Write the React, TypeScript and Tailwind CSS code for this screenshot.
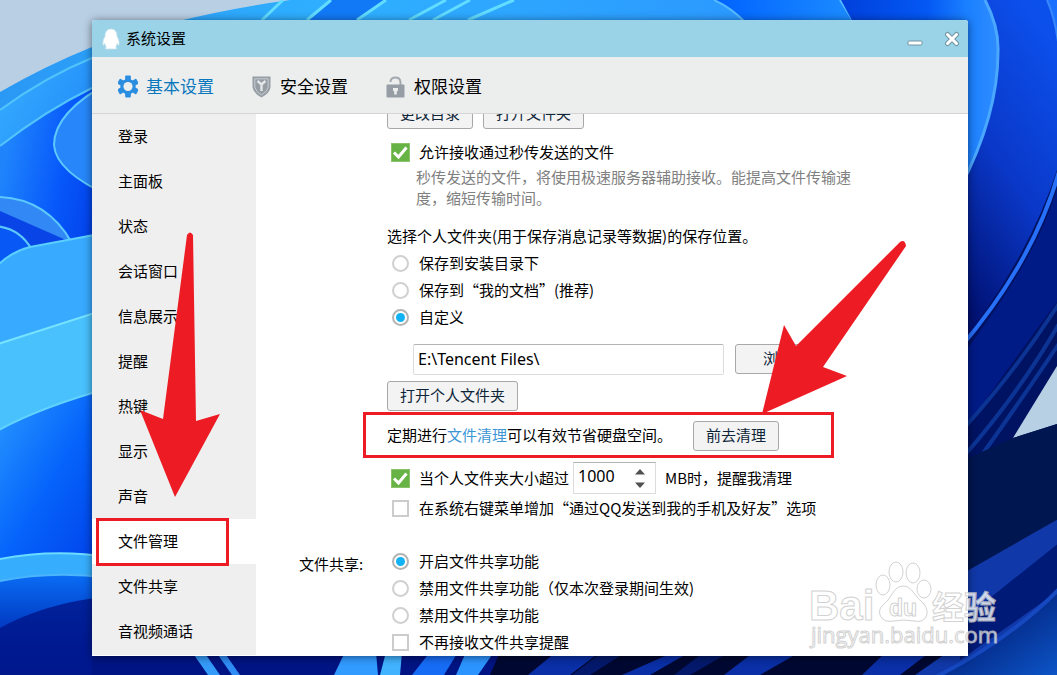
import { useState, type ReactNode } from "react";

const TABS = [
    { id: "basic", label: "基本设置" },
    { id: "safety", label: "安全设置" },
    { id: "rights", label: "权限设置" }
];

const MENU = ["登录", "主面板", "状态", "会话窗口", "信息展示", "提醒", "热键", "显示", "声音", "文件管理", "文件共享", "音视频通话"];

const SAVE_OPTIONS = ["保存到安装目录下", "保存到“我的文档”(推荐)", "自定义"];

const SHARE_OPTIONS = ["开启文件共享功能", "禁用文件共享功能（仅本次登录期间生效)", "禁用文件共享功能"];

function Wallpaper() {
    return (
        <svg className="absolute inset-0 h-full w-full" viewBox="0 0 1057 675" preserveAspectRatio="none" aria-hidden="true">
            <defs>
                <linearGradient id="petal" x1="0" y1="0" x2="1" y2="1">
                    <stop offset="0" stopColor="#37b0ff" />
                    <stop offset="1" stopColor="#1473f5" />
                </linearGradient>
                <linearGradient id="deep" x1="0" y1="0" x2="1" y2="1">
                    <stop offset="0" stopColor="#2b9dff" />
                    <stop offset="0.5" stopColor="#0563fb" />
                    <stop offset="1" stopColor="#003be6" />
                </linearGradient>
                <linearGradient id="fold" x1="0" y1="0.6" x2="1" y2="0.9">
                    <stop offset="0" stopColor="#1f84fc" />
                    <stop offset="0.5" stopColor="#0758fa" />
                    <stop offset="1" stopColor="#003ae4" />
                </linearGradient>
                <linearGradient id="top" x1="0" y1="0" x2="1" y2="0">
                    <stop offset="0" stopColor="#2a98f5" />
                    <stop offset="0.45" stopColor="#2fb0ff" />
                    <stop offset="1" stopColor="#2b98ff" />
                </linearGradient>
                <linearGradient id="topRight" x1="0" y1="0" x2="1" y2="0">
                    <stop offset="0" stopColor="#0062ff" />
                    <stop offset="1" stopColor="#1c8cff" />
                </linearGradient>
                <linearGradient id="rightPetal" x1="0" y1="0" x2="1" y2="0">
                    <stop offset="0" stopColor="#0040dc" />
                    <stop offset="0.55" stopColor="#0458f4" />
                    <stop offset="0.8" stopColor="#1a80ff" />
                    <stop offset="1" stopColor="#2f8cff" />
                </linearGradient>
                <linearGradient id="rightBand" x1="0.7" y1="0" x2="0.3" y2="1">
                    <stop offset="0" stopColor="#0c50ec" />
                    <stop offset="0.5" stopColor="#0a38c8" />
                    <stop offset="1" stopColor="#001070" />
                </linearGradient>
                <linearGradient id="night" x1="0" y1="0" x2="0" y2="1">
                    <stop offset="0" stopColor="#0a6cf4" />
                    <stop offset="0.5" stopColor="#0030b8" />
                    <stop offset="1" stopColor="#001482" />
                </linearGradient>
                <linearGradient id="corner" x1="0.2" y1="0.2" x2="1" y2="1">
                    <stop offset="0" stopColor="#001468" />
                    <stop offset="1" stopColor="#0d58cc" />
                </linearGradient>
            </defs>
            <rect width="1057" height="675" fill="#b9cfe4" />
            <path d="M0 92Q45 66 92 47Q180 15 290 0H760V675H0Z" fill="url(#top)" />
            <path d="M0 110Q45 77 92 58L110 52V250H0Z" fill="url(#petal)" />
            <path d="M0 146Q45 111 92 88L110 78V250H0Z" fill="url(#fold)" />
            <path d="M110 82Q54 112 54 145Q56 172 110 196Z" fill="#2787fa" stroke="#5cc8fb" strokeWidth="2" />
            <path d="M0 110Q45 77 92 58M0 146Q45 111 92 88" fill="none" stroke="#53c4fb" strokeWidth="2" />
            <path d="M-5 197Q46 197 72 243L-5 270Z" fill="#3288f5" stroke="#5cc8fb" strokeWidth="2" />
            <path d="M0 211L66 240L0 270Z" fill="#0844e6" />
            <path d="M-5 226Q20 228 32 250L-5 270Z" fill="#0758f4" stroke="#5cc8fb" strokeWidth="2" />
            <path d="M-5 268Q10 252 30 247L110 232V350H-5Z" fill="#38aaff" stroke="#5bcffd" strokeWidth="2" />
            <path d="M-5 345L110 308V440H-5Z" fill="#48c1fd" stroke="#77e3ff" strokeWidth="2" />
            <path d="M-5 432Q40 407 110 388V575H-5Z" fill="url(#deep)" stroke="#62d2ff" strokeWidth="2" />
            <path d="M-5 560Q50 548 110 557V700H-5Z" fill="#37aefd" stroke="#6bdcff" strokeWidth="2" />
            <path d="M-5 582Q50 570 110 578V700H-5Z" fill="url(#night)" stroke="#4bb4fb" strokeWidth="2" />
            <path d="M0 628Q45 603 110 596V675H0Z" fill="#001589" opacity="0.8" />

            <path d="M386 0L357 20H307L331 0Z" fill="#1279f6" />
            <path d="M283 0L262 20M331 0L307 20M386 0L357 20M446 0L409 20M470 0L433 20M514 0L468 20" stroke="#62dcff" strokeWidth="3" fill="none" />
            <path d="M714 0Q730 7 744 21H853L840 0Z" fill="url(#topRight)" />
            <path d="M714 0Q730 7 744 21M840 0L853 21" stroke="#55b9ff" strokeWidth="2" fill="none" />

            <path d="M900 24H1057V675H900Z" fill="#001262" />
            <path d="M980 0H1057V170Q1030 255 960 345V0Z" fill="url(#rightBand)" />
            <path d="M1047 0Q1056 20 1059 50V0Z" fill="#1c70ff" />
            <path d="M1047 0Q1056 20 1059 50" fill="none" stroke="#3787fb" strokeWidth="2" />
            <path d="M841 0H985Q999 27 998 52Q998 115 960 188V24H854Z" fill="url(#rightPetal)" />
            <path d="M985 0Q999 27 998 52Q998 115 960 188" fill="none" stroke="#4ba8ff" strokeWidth="3" />
            <path d="M1060 168Q1035 260 960 348" stroke="#2770fa" strokeWidth="4" fill="none" />
            <path d="M1060 178Q1042 252 960 358L968 425Q1010 365 1057 302Z" fill="#001a86" />
            <path d="M1060 302Q1015 372 964 428M1060 322Q1020 392 964 456M1060 342Q1020 402 964 480" stroke="#0c3494" strokeWidth="4" fill="none" />
            <path d="M1013 438L1057 366V424Z" fill="#b8d0e4" />
            <path d="M1013 438L1057 424V520L968 580V458Z" fill="#001650" />
            <path d="M960 575L1060 518V600L940 675H870Z" fill="#1038a8" />
            <path d="M1060 542L960 622V660L1060 590Z" fill="#001a78" />
            <path d="M1060 588Q1010 640 930 680H1060Z" fill="url(#corner)" />
            <path d="M1060 588Q1010 640 930 680" fill="none" stroke="#1648c0" strokeWidth="4" />

            <path d="M92 652H500V675H92Z" fill="#001483" />
            <path d="M192 652L208 675H220L204 652Z" fill="#359bfa" />
            <path d="M216 652L232 675H240L224 652Z" fill="#2f8cf5" />
            <path d="M345 652L334 675H378L376 652Z" fill="#319bff" />
            <path d="M386 652H402L400 675H380Z" fill="#42b3ff" />
            <path d="M430 652H458L444 675H412Z" fill="#176cf5" />
            <path d="M466 652H494L478 675H456Z" fill="#2c94ff" />
            <path d="M500 652H948L915 675H490Z" fill="#000832" />
            <path d="M556 652H600L570 675H528ZM674 652H690L650 675H622ZM754 652H800L760 675H724ZM886 652H930L900 675H862Z" fill="#0a2fa6" />
            <path d="M602 652H626L590 675H572ZM704 652H730L690 675H674Z" fill="#04196c" />
        </svg>
    );
}

function TabIcon({ id }: { id: string }) {
    if (id === "basic") {
        return (
            <svg width="20" height="23" viewBox="0 0 21 23" aria-hidden="true">
                <g fill="#2b8de0">
                    <circle cx="10.5" cy="11.5" r="8" />
                    <rect x="7.5" y="0" width="6" height="23" rx="1" />
                    <rect x="7.5" y="0" width="6" height="23" rx="1" transform="rotate(60 10.5 11.5)" />
                    <rect x="7.5" y="0" width="6" height="23" rx="1" transform="rotate(120 10.5 11.5)" />
                </g>
                <circle cx="10.5" cy="11.5" r="4.8" fill="#eceeee" />
            </svg>
        );
    }
    if (id === "safety") {
        return (
            <svg width="20" height="22" viewBox="0 0 20 22" aria-hidden="true">
                <path d="M0.5 0.5H18.500V11Q18 17 9.5 21.5Q1 17 0.5 11Z" fill="#969da5" />
                <path d="M2.800 2.800H16.200V11Q15.500 15.500 9.500 19Q3.500 15.500 2.800 11Z" fill="none" stroke="#c9cdd1" strokeWidth="1" />
                <path d="M5.500 5L9.500 8.500L13.500 5M9.500 8.500V15" fill="none" stroke="#e4e6e7" strokeWidth="2.400" />
            </svg>
        );
    }
    return (
        <svg width="20" height="22" viewBox="0 0 20 22" aria-hidden="true">
            <path d="M4.500 6V5.500Q5 1.500 9.500 1.500T14.500 6V9" fill="none" stroke="#a3a9af" strokeWidth="2" />
            <rect x="0.500" y="8.500" width="18" height="13" rx="1" fill="#969da5" />
            <path d="M7 12H12V14.500L10.800 15.500V18.500H8.200V15.500L7 14.500Z" fill="#eceeee" />
        </svg>
    );
}

function Check({ label, defaultChecked, children }: { label: string; defaultChecked?: boolean; children?: ReactNode }) {
    return (
        <div className="flex min-h-[27px] items-center pl-1">
            <label className="flex items-center gap-[9px]">
                <span className="relative flex h-[19px] w-[19px] items-center justify-center">
                    <input
                        type="checkbox"
                        defaultChecked={defaultChecked}
                        className="peer h-[17px] w-[17px] appearance-none border-2 border-[#cccccc] bg-white checked:h-[19px] checked:w-[19px] checked:border checked:border-[#8cc26c] checked:bg-[#68b346]"
                    />
                    <svg className="pointer-events-none absolute inset-0 hidden peer-checked:block" viewBox="0 0 19 19" aria-hidden="true">
                        <path d="M3 9.500L7.500 14L15.500 4.500" fill="none" stroke="#fff" strokeWidth="3" />
                    </svg>
                </span>
                <span className="pb-[2px]">{label}</span>
            </label>
            {children}
        </div>
    );
}

function Radio({ name, label, defaultChecked }: { name: string; label: string; defaultChecked?: boolean }) {
    return (
        <label className="flex h-[27px] items-center gap-[9px] pl-1">
            <span className="relative flex h-[19px] w-[19px] items-center justify-center">
                <input
                    type="radio"
                    name={name}
                    defaultChecked={defaultChecked}
                    className="peer h-[17px] w-[17px] appearance-none rounded-full border-2 border-[#d0d0d0] bg-white checked:border-[#b4b4b4]"
                />
                <span className="pointer-events-none absolute inset-[5px] hidden rounded-full bg-[#12b2f5] peer-checked:block" />
            </span>
            <span className="pb-[2px]">{label}</span>
        </label>
    );
}

function PushButton({ children, className = "w-[86px]" }: { children: ReactNode; className?: string }) {
    return (
        <button className={`h-[30px] shrink-0 rounded-[3px] border border-[#a8a8a8] bg-[#f3f3f3] pb-[3px] text-[#0c2538] ${className}`}>
            {children}
        </button>
    );
}

function Watermark() {
    return (
        <svg className="pointer-events-none absolute right-[53px] bottom-6 opacity-80" width="196" height="92" viewBox="0 0 196 92" aria-hidden="true">
            <g fill="#fff" stroke="#c8c8c8" strokeWidth="1">
                <ellipse cx="75" cy="26" rx="7" ry="10" />
                <ellipse cx="88" cy="13" rx="7" ry="10" />
                <ellipse cx="105" cy="14" rx="7" ry="10" />
                <ellipse cx="116" cy="30" rx="7" ry="9" />
                <path d="M95 27Q101 27 106 34T116 45Q121 52 118 58Q114 64 106 62Q95 60 86 62Q75 64 72 56Q70 50 76 45Q80 42 84 35Q89 27 95 27Z" />
                <text x="1" y="61" fontSize="42" className="font-['Liberation_Sans',sans-serif] font-bold">Bai</text>
                <text x="81" y="57" fontSize="23" className="font-['Liberation_Sans',sans-serif] font-bold">du</text>
                <text x="124" y="60" fontSize="32" className="font-['Noto_Sans_CJK_SC',sans-serif] font-bold">经验</text>
                <text x="3" y="84" fontSize="22" className="font-['Open_Sans',sans-serif]">jingyan.baidu.com</text>
            </g>
        </svg>
    );
}

export default function App() {
    const [tab, setTab] = useState("basic");
    const [active, setActive] = useState("文件管理");

    return (
        <div lang="zh-CN" className="relative flex h-screen flex-col overflow-hidden pt-5 pr-[89px] pb-[19px] pl-[92px] font-['Noto_Sans_CJK_SC',sans-serif] text-[15px] leading-[21px] text-black">
            <Wallpaper />

            <div className="relative flex min-h-0 flex-1 flex-col rounded-t-[3px] bg-white shadow-[0_1px_8px_rgba(0,0,0,0.5)]">
                <header className="flex h-[37px] shrink-0 items-center rounded-t-[3px] bg-[#9ad3e7] pr-2 pl-[10px]">
                    <svg width="18" height="22" viewBox="0 0 18 22" aria-hidden="true">
                        <path
                            d="M9 1C5 1 3 4 3 8.500C1.500 11 0.500 14 1 17C1.500 17.500 2 16.500 2.800 15.500C3 17 3.600 18.200 4.500 19C3 19.500 3 21 4.500 21H13.500C15 21 15 19.500 13.500 19C14.400 18.200 15 17 15.200 15.500C16 16.500 16.500 17.500 17 17C17.500 14 16.500 11 15 8.500C15 4 13 1 9 1Z"
                            fill="#fff"
                            stroke="#c9e3ee"
                            strokeWidth="0.800"
                        />
                    </svg>
                    <h1 className="ml-[6px] pb-[3px]">系统设置</h1>
                    <button aria-label="最小化" className="ml-auto">
                        <svg width="16" height="16" viewBox="0 0 16 16" aria-hidden="true">
                            <rect x="1" y="10" width="14" height="4" rx="1" fill="#fff" stroke="#7295a3" />
                        </svg>
                    </button>
                    <button aria-label="关闭" className="ml-[21px]">
                        <svg width="16" height="16" viewBox="0 0 16 16" aria-hidden="true">
                            <path d="M3.500 3.500L12.500 12.500M12.500 3.500L3.500 12.500" stroke="#7295a3" strokeWidth="5" strokeLinecap="round" />
                            <path d="M3.500 3.500L12.500 12.500M12.500 3.500L3.500 12.500" stroke="#fff" strokeWidth="3" strokeLinecap="round" />
                        </svg>
                    </button>
                </header>

                <div className="flex h-[57px] shrink-0 items-center border-b border-[#d3d4d4] bg-[#eceeee] pt-[3px] pl-[26px]">
                    {TABS.map((item) => (
                        <button
                            key={item.id}
                            onClick={() => setTab(item.id)}
                            className={`flex w-[134px] items-center gap-2 text-[17px] ${tab === item.id ? "text-[#0a77bd]" : "text-black"}`}
                        >
                            <TabIcon id={item.id} />
                            <span className="pb-[2px]">{item.label}</span>
                        </button>
                    ))}
                </div>

                <div className="flex min-h-0 flex-1 overflow-hidden">
                    <nav className="mb-px w-[164px] shrink-0 bg-[#efefef]">
                        {MENU.map((item) => (
                            <button
                                key={item}
                                onClick={() => setActive(item)}
                                className={`relative flex h-[45px] w-full items-center pb-[2px] pl-[26px] ${active === item ? "bg-white" : ""}`}
                            >
                                {item}
                                {item === "文件管理" && <span className="absolute -top-px right-[27px] -bottom-[2px] left-1 border-3 border-[#ed1c24]" />}
                            </button>
                        ))}
                    </nav>

                    <main className="min-w-0 flex-1 overflow-hidden">
                        <section className="ml-[131px]">
                            <div className="-mt-[15px] flex gap-[10px]">
                                <PushButton>更改目录</PushButton>
                                <PushButton className="w-[101px]">打开文件夹</PushButton>
                            </div>
                            <div className="mt-[10px]">
                                <Check label="允许接收通过秒传发送的文件" defaultChecked />
                            </div>
                            <p className="ml-[29px] max-w-[440px] pb-[2px] text-[#808080]">
                                秒传发送的文件，将使用极速服务器辅助接收。能提高文件传输速度，缩短传输时间。
                            </p>

                            <fieldset className="mt-[13px]">
                                <legend className="h-[27px] leading-[25px]">选择个人文件夹(用于保存消息记录等数据)的保存位置。</legend>
                                {SAVE_OPTIONS.map((label) => (
                                    <Radio key={label} name="save" label={label} defaultChecked={label === "自定义"} />
                                ))}
                            </fieldset>
                            <div className="mt-[13px] ml-[26px] flex gap-[11px]">
                                <input
                                    aria-label="保存位置"
                                    defaultValue="E:\Tencent Files\"
                                    className="h-[31px] w-[311px] rounded-[2px] border border-[#dcdcdc] border-t-[#b4b4b4] px-1 pb-[2px] font-['Noto_Sans',sans-serif] text-base"
                                />
                                <PushButton>浏览</PushButton>
                            </div>
                            <PushButton className="mt-[6px] block w-[131px]">打开个人文件夹</PushButton>

                            <div className="relative mt-[10px] flex items-center">
                                <span className="w-[306px] pb-[3px]">
                                    定期进行<a href="#clean" className="text-[#3c96d6]">文件清理</a>可以有效节省硬盘空间。
                                </span>
                                <PushButton>前去清理</PushButton>
                                <span className="pointer-events-none absolute -top-[9px] -bottom-[7px] -left-6 w-[471px] border-3 border-[#ed1c24]" />
                            </div>

                            <div className="mt-[11px]">
                                <Check label="当个人文件夹大小超过" defaultChecked>
                                    <span className="relative ml-1">
                                        <input
                                            type="text"
                                            inputMode="numeric"
                                            aria-label="文件夹大小上限"
                                            defaultValue="1000"
                                            className="block h-8 w-[83px] border border-[#dcdcdc] border-t-[#b4b4b4] px-1 pb-[5px] font-['Noto_Sans',sans-serif] text-base"
                                        />
                                        <svg className="pointer-events-none absolute top-[7px] right-[11px]" width="10" height="19" viewBox="0 0 10 19" aria-hidden="true">
                                            <path d="M0 5.500L5 0L10 5.500ZM0 13.500L5 19L10 13.500Z" fill="#505050" />
                                        </svg>
                                    </span>
                                    <span className="ml-[9px] pb-[2px]">MB时，提醒我清理</span>
                                </Check>
                            </div>
                            <div className="mt-px">
                                <Check label="在系统右键菜单增加“通过QQ发送到我的手机及好友”选项" />
                            </div>
                        </section>

                        <section className="mt-[26px] flex">
                            <h2 className="w-[131px] pt-[5px] pl-[43px]">文件共享:</h2>
                            <div>
                                {SHARE_OPTIONS.map((label, i) => (
                                    <Radio key={label} name="share" label={label} defaultChecked={i === 0} />
                                ))}
                                <Check label="不再接收文件共享提醒" />
                            </div>
                        </section>
                    </main>
                </div>

                {/* arrows pointing at the menu entry and the clean-up button */}
                <svg className="pointer-events-none absolute top-[212px] left-12" width="80" height="265" viewBox="0 0 80 265" aria-hidden="true">
                    <path d="M35 265L0 178L23 187L47 3Q50 -2 53 3L56 189L80 182Z" fill="#ed1c24" />
                </svg>
                <svg className="pointer-events-none absolute top-[219px] left-[670px]" width="146" height="176" viewBox="0 0 146 176" aria-hidden="true">
                    <path d="M0 175L22 86L34 107L138 3Q143 0 144 7L61 128L85 137Z" fill="#ed1c24" />
                </svg>
            </div>

            <Watermark />
        </div>
    );
}
